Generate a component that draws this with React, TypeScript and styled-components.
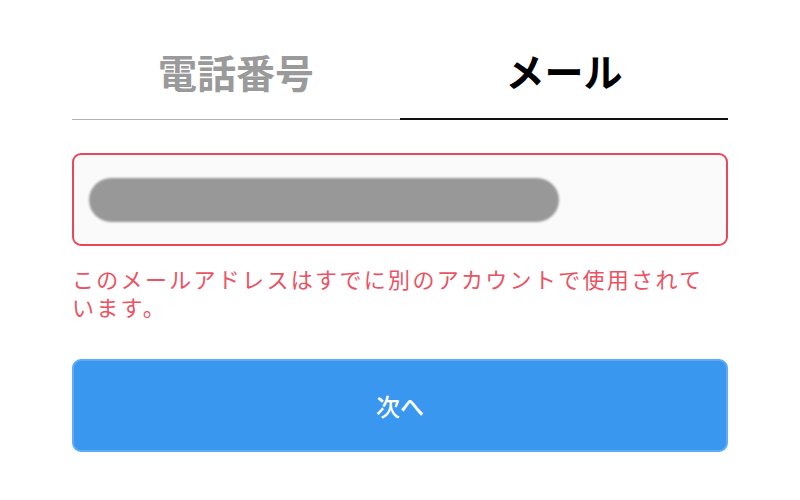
import React from "react";
import styled, { createGlobalStyle } from "styled-components";

const Global = createGlobalStyle`
  html, body { margin: 0; padding: 0; background: #ffffff; }
  body { font-family: "Noto Sans CJK JP", "Noto Sans", sans-serif; }
`;

const Page = styled.div`
  width: 800px;
  height: 500px;
  box-sizing: border-box;
  padding: 40px 72px 0 72px;
  display: flex;
  flex-direction: column;
`;

const Tabs = styled.div`
  display: grid;
  grid-template-columns: 1fr 1fr;
`;

const Tab = styled.div<{ $active?: boolean }>`
  height: 80px;
  box-sizing: border-box;
  display: flex;
  align-items: center;
  justify-content: center;
  padding-bottom: 18px;
  font-size: 39px;
  font-weight: 700;
  color: ${(p) => (p.$active ? "#000000" : "#9a9a9a")};
  border-bottom: ${(p) => (p.$active ? "2px solid #111111" : "1px solid #b5b5b5")};
  margin-bottom: ${(p) => (p.$active ? "0" : "1px")};
`;

const Field = styled.div`
  margin-top: 32px;
  height: 93px;
  box-sizing: border-box;
  border: 2px solid #e9475a;
  border-radius: 9px;
  background: #fafafa;
  display: flex;
  align-items: center;
  padding-left: 15px;
`;

const Masked = styled.div`
  width: 470px;
  height: 44px;
  border-radius: 22px;
  background: #989898;
  filter: blur(1.2px);
`;

const ErrorText = styled.p`
  margin: 18px 0 0 0;
  padding-right: 16px;
  font-size: 22px;
  font-weight: 400;
  line-height: 28px;
  color: #ea5363;
  letter-spacing: 2.3px;
`;

const NextButton = styled.button`
  margin-top: 39px;
  height: 93px;
  width: 100%;
  box-sizing: border-box;
  border: 2px solid #5eacf6;
  border-radius: 9px;
  background: #3997f0;
  color: #ffffff;
  font-family: inherit;
  font-size: 24px;
  font-weight: 500;
  display: flex;
  align-items: center;
  justify-content: center;
`;

export default function App() {
  return (
    <>
      <Global />
      <Page>
        <Tabs>
          <Tab>電話番号</Tab>
          <Tab $active>メール</Tab>
        </Tabs>
        <Field>
          <Masked />
        </Field>
        <ErrorText>このメールアドレスはすでに別のアカウントで使用されています。</ErrorText>
        <NextButton>次へ</NextButton>
      </Page>
    </>
  );
}
